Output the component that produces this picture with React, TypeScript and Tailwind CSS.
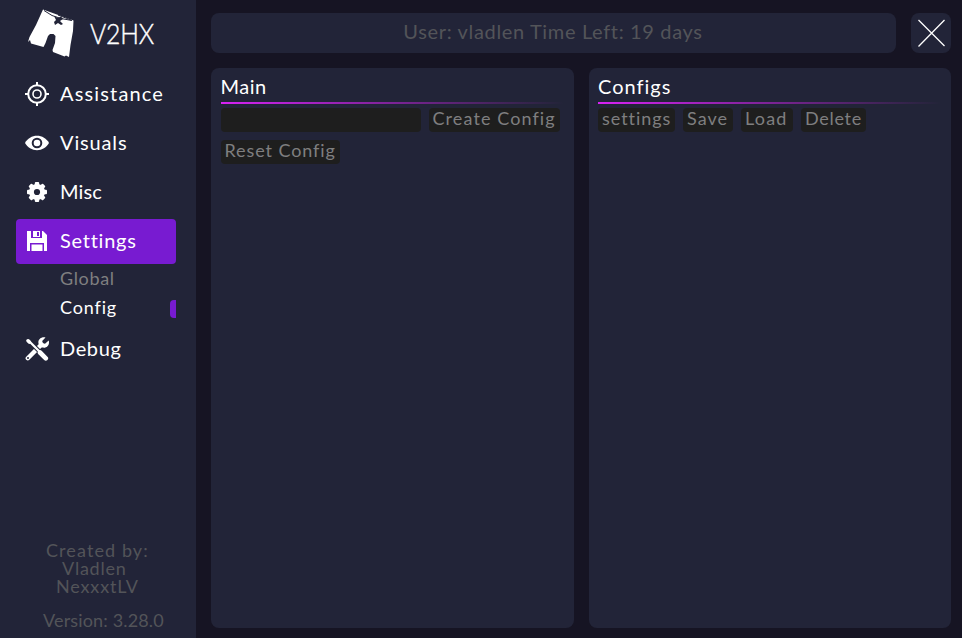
import type { ReactNode } from 'react';

function ShortsLogo() {
  return (
    <svg width="48" height="50" viewBox="0 0 48 50" className="shrink-0">
      <path
        fill="#fff"
        d="M15 0.500 L45.500 11.500 L45 22 L42.500 36 L41 48 L38 46.500 L36.500 47.500 L34 46.500 L25 43 L24.500 41 L27 34 L27.500 27 L25.500 25 L22 25 L20 27 L17.500 34 L15.500 38 L3 34.500 L2 31 L0 33 L1.500 28 L8 16 Z"
      />
      <path stroke="#222438" strokeWidth="1" fill="none" d="M16 1.500 L24 6.500 L33 9.500 L44 11.500 M30 6 L43 11" />
      <path fill="#222438" d="M26 7 L30 9 L33 7.500 L35 10 L32 12 L35 15 L33 16 L30 14 L27 16 L26 13 L28 11 Z" />
    </svg>
  );
}

function TargetIcon() {
  return (
    <svg width="24" height="24" viewBox="0 0 24 24" fill="none" stroke="#fff" strokeWidth="2">
      <circle cx="12" cy="12" r="8.800" />
      <circle cx="12" cy="12" r="4" strokeWidth="1.600" />
      <path d="M12 0v4M12 20v4M0 12h4M20 12h4" />
    </svg>
  );
}

function EyeIcon() {
  return (
    <svg width="24" height="24" viewBox="0 0 24 24">
      <path fill="#fff" d="M0 12C2.500 7.500 7 4.800 12 4.800S21.500 7.500 24 12C21.500 16.500 17 19.200 12 19.200S2.500 16.500 0 12Z" />
      <circle cx="12" cy="12" r="4.300" fill="#fff" stroke="#222438" strokeWidth="2" />
    </svg>
  );
}

function GearIcon() {
  return (
    <svg width="24" height="24" viewBox="0 0 24 24">
      <g fill="#fff">
        <rect x="9.800" y="2" width="4.400" height="20" rx="1" />
        <rect x="9.800" y="2" width="4.400" height="20" rx="1" transform="rotate(45 12 12)" />
        <rect x="9.800" y="2" width="4.400" height="20" rx="1" transform="rotate(90 12 12)" />
        <rect x="9.800" y="2" width="4.400" height="20" rx="1" transform="rotate(135 12 12)" />
        <circle cx="12" cy="12" r="8" />
      </g>
      <circle cx="12" cy="12" r="3.100" fill="#222438" />
    </svg>
  );
}

function SaveIcon() {
  return (
    <svg width="24" height="24" viewBox="0 0 24 24">
      <path fill="#fff" fillRule="evenodd" d="M2 2H6V9H17V2H18L22 6V22H19V14H5V22H2ZM8 2H15V8H8ZM12 3V7H14V3ZM6.500 15.500H17.500V22H6.500Z" />
    </svg>
  );
}

function ToolsIcon() {
  return (
    <svg width="24" height="24" viewBox="0 0 24 24">
      <path fill="none" stroke="#fff" strokeWidth="4.400" strokeLinecap="round" d="M2.800 21.200 L16.500 7.500" />
      <path fill="#fff" d="M20.500 0.500 L17.200 4 L17.800 6.200 L20 6.800 L23.700 3.500 C25 7.500 22 11.500 17.500 10.500 L14.500 10 L13.500 6.500 C12.500 2.500 16.500 -0.700 20.500 0.500Z" />
      <path stroke="#222438" strokeWidth="4.200" d="M7 7L15.500 15.500" />
      <path stroke="#fff" strokeWidth="2.200" d="M3 3L15 15" />
      <path stroke="#fff" strokeWidth="3.600" strokeLinecap="round" d="M3 3.800L4.300 5" />
      <path stroke="#fff" strokeWidth="4.600" strokeLinecap="round" d="M15 15.500L20.800 21.300" />
      <circle cx="3" cy="21" r="1" fill="#222438" />
    </svg>
  );
}

function NavItem({ icon, label, tracking, active = false }: { icon: ReactNode; label: string; tracking: string; active?: boolean }) {
  return (
    <div className={`flex h-[45px] w-40 shrink-0 items-center gap-[11px] rounded pl-[9px] text-white ${active ? 'bg-[#781bd1]' : ''}`}>
      <span className="mb-px">{icon}</span>
      <span className={`pb-[3px] text-[20px] leading-6 ${tracking}`}>{label}</span>
    </div>
  );
}

function ConfigButton({ label, size }: { label: string; size: string }) {
  return (
    <button className={`flex h-6 shrink-0 rounded bg-[#1e1e1e] pl-[4px] text-[18px] leading-[20px] text-[#7f7f80] ${size}`}>
      {label}
    </button>
  );
}

function Panel({ title, tracking, children }: { title: string; tracking: string; children: ReactNode }) {
  return (
    <section className="flex-1 rounded-lg bg-[#222438] px-[9.500px]">
      <h2 className={`h-[34px] pt-[5px] text-[20px] leading-[26px] text-white ${tracking}`}>{title}</h2>
      <div className="h-0.5 w-[343px] bg-linear-to-r from-[#d722f4] to-transparent" />
      <div className="flex flex-wrap gap-2 pt-1">{children}</div>
    </section>
  );
}

export default function App() {
  return (
    <div className="flex h-[638px] w-[962px] overflow-hidden bg-[#161423] font-['Lato',sans-serif] font-normal whitespace-nowrap">
      <aside className="flex w-[196px] flex-col bg-[#222438]">
        <div className="flex h-[72px] items-start gap-[14px] pt-[9px] pl-7">
          <ShortsLogo />
          <span className="origin-left scale-x-90 pt-[9px] text-[27.500px] leading-8 font-light tracking-[-0.2px] text-white [-webkit-text-stroke:0.4px_white]">V2HX</span>
        </div>
        <nav className="flex flex-col pl-4">
          <div className="flex flex-col gap-1">
            <NavItem icon={<TargetIcon />} label="Assistance" tracking="tracking-[1.15px]" />
            <NavItem icon={<EyeIcon />} label="Visuals" tracking="tracking-[0.85px]" />
            <NavItem icon={<GearIcon />} label="Misc" tracking="tracking-[0.1px]" />
            <NavItem icon={<SaveIcon />} label="Settings" tracking="tracking-[0.75px]" active />
          </div>
          <div className="flex h-[63px] w-40 flex-col pl-11 text-[18px]">
            <span className="h-[29px] leading-[29px] tracking-[0.65px] text-[#7f7f80]">Global</span>
            <div className="flex h-[29px] items-center justify-between text-white">
              <span className="tracking-[0.85px]">Config</span>
              <i className="mt-[3px] h-[18px] w-1.5 rounded-l bg-[#781bd1]" />
            </div>
          </div>
          <NavItem icon={<ToolsIcon />} label="Debug" tracking="tracking-[0.6px]" />
        </nav>
        <footer className="mt-auto flex flex-col pb-[9px] text-[18px] leading-[18px] text-[#535459]">
          <span className="pl-[46px] tracking-[1.1px]">Created by:</span>
          <span className="pl-[62px] tracking-[0.75px]">Vladlen</span>
          <span className="pl-[56px] tracking-[0.85px]">NexxxtLV</span>
          <span className="mt-4 pl-[43px] tracking-[0.15px]">Version: 3.28.0</span>
        </footer>
      </aside>
      <main className="flex flex-1 flex-col gap-[15px] pt-[13px] pr-[11px] pb-[10px] pl-[15px]">
        <header className="flex h-10 shrink-0 gap-[15px]">
          <div className="flex flex-1 justify-center rounded-lg bg-[#222438] pr-px text-[20px] leading-[36px] tracking-[0.65px] text-[#535459]">
            User: vladlen Time Left: 19 days
          </div>
          <button className="flex size-10 items-center justify-center rounded-lg bg-[#222438]">
            <svg width="28" height="28" viewBox="0 0 28 28" stroke="#fff" strokeWidth="1.300">
              <path d="M1.500 1L27.500 27M27.500 1L1.500 27.500" />
            </svg>
          </button>
        </header>
        <div className="flex flex-1 gap-[15px]">
          <Panel title="Main" tracking="tracking-[0.5px]">
            <input className="h-6 w-[200px] rounded bg-[#1e1e1e] outline-none" />
            <ConfigButton label="Create Config" size="w-[131px] tracking-[1.1px]" />
            <ConfigButton label="Reset Config" size="w-[119px] tracking-[0.9px]" />
          </Panel>
          <Panel title="Configs" tracking="tracking-[1px]">
            <ConfigButton label="settings" size="w-[77px] tracking-[0.95px]" />
            <ConfigButton label="Save" size="w-[50px] tracking-[1px]" />
            <ConfigButton label="Load" size="w-[52px] tracking-[1.2px]" />
            <ConfigButton label="Delete" size="w-[65px] tracking-[0.7px]" />
          </Panel>
        </div>
      </main>
    </div>
  );
}
